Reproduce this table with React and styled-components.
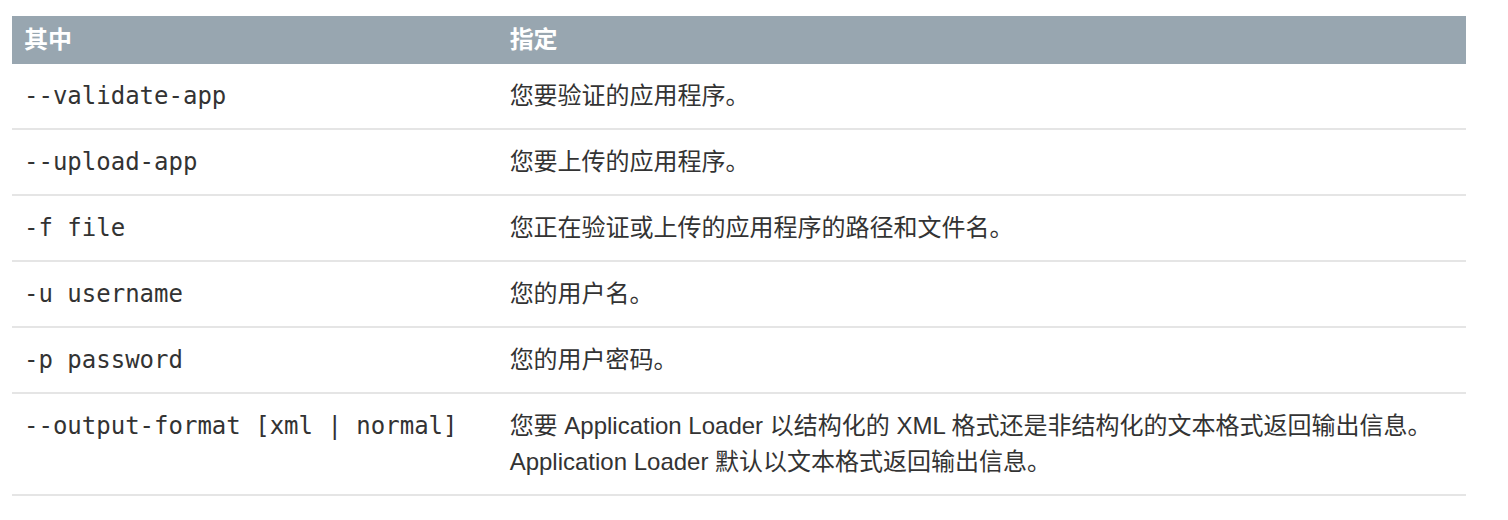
import React from "react";
import styled, { createGlobalStyle } from "styled-components";

const GlobalStyle = createGlobalStyle`
  body {
    margin: 0;
    background: #ffffff;
    font-family: "Liberation Sans", "Noto Sans CJK SC", sans-serif;
  }
`;

const Page = styled.div`
  padding: 16px 42px 0 12px;
`;

const Table = styled.table`
  width: 100%;
  border-collapse: collapse;
  table-layout: fixed;
  font-size: 24px;
  line-height: 36px;
  color: #333333;
`;

const HeadCell = styled.th`
  box-sizing: border-box;
  background: #98a6b0;
  color: #ffffff;
  font-weight: bold;
  text-align: left;
  padding: 6px 12px;
  width: ${(p) => p.$width || "auto"};
`;

const Row = styled.tr`
  border-bottom: 2px solid #e5e5e5;
`;

const Cell = styled.td`
  box-sizing: border-box;
  padding: 14px 12px;
  vertical-align: top;
  font-family: ${(p) =>
    p.$code
      ? `"DejaVu Sans Mono", "Noto Sans CJK SC", monospace`
      : `"Liberation Sans", "Noto Sans CJK SC", sans-serif`};
  white-space: ${(p) => (p.$code ? "pre" : "normal")};
`;

const Line = styled.span`
  display: block;
`;

const options = [
  { flag: "--validate-app", desc: ["您要验证的应用程序。"] },
  { flag: "--upload-app", desc: ["您要上传的应用程序。"] },
  { flag: "-f file", desc: ["您正在验证或上传的应用程序的路径和文件名。"] },
  { flag: "-u username", desc: ["您的用户名。"] },
  { flag: "-p password", desc: ["您的用户密码。"] },
  {
    flag: "--output-format [xml | normal]",
    desc: [
      "您要 Application Loader 以结构化的 XML 格式还是非结构化的文本格式返回输出信息。",
      "Application Loader 默认以文本格式返回输出信息。",
    ],
  },
];

const App = () => {
  return (
    <Page>
      <GlobalStyle />
      <Table>
        <thead>
          <tr>
            <HeadCell $width="33.4%">其中</HeadCell>
            <HeadCell>指定</HeadCell>
          </tr>
        </thead>
        <tbody>
          {options.map((o) => (
            <Row key={o.flag}>
              <Cell $code>{o.flag}</Cell>
              <Cell>
                {o.desc.map((line) => (
                  <Line key={line}>{line}</Line>
                ))}
              </Cell>
            </Row>
          ))}
        </tbody>
      </Table>
    </Page>
  );
};

export default App;
